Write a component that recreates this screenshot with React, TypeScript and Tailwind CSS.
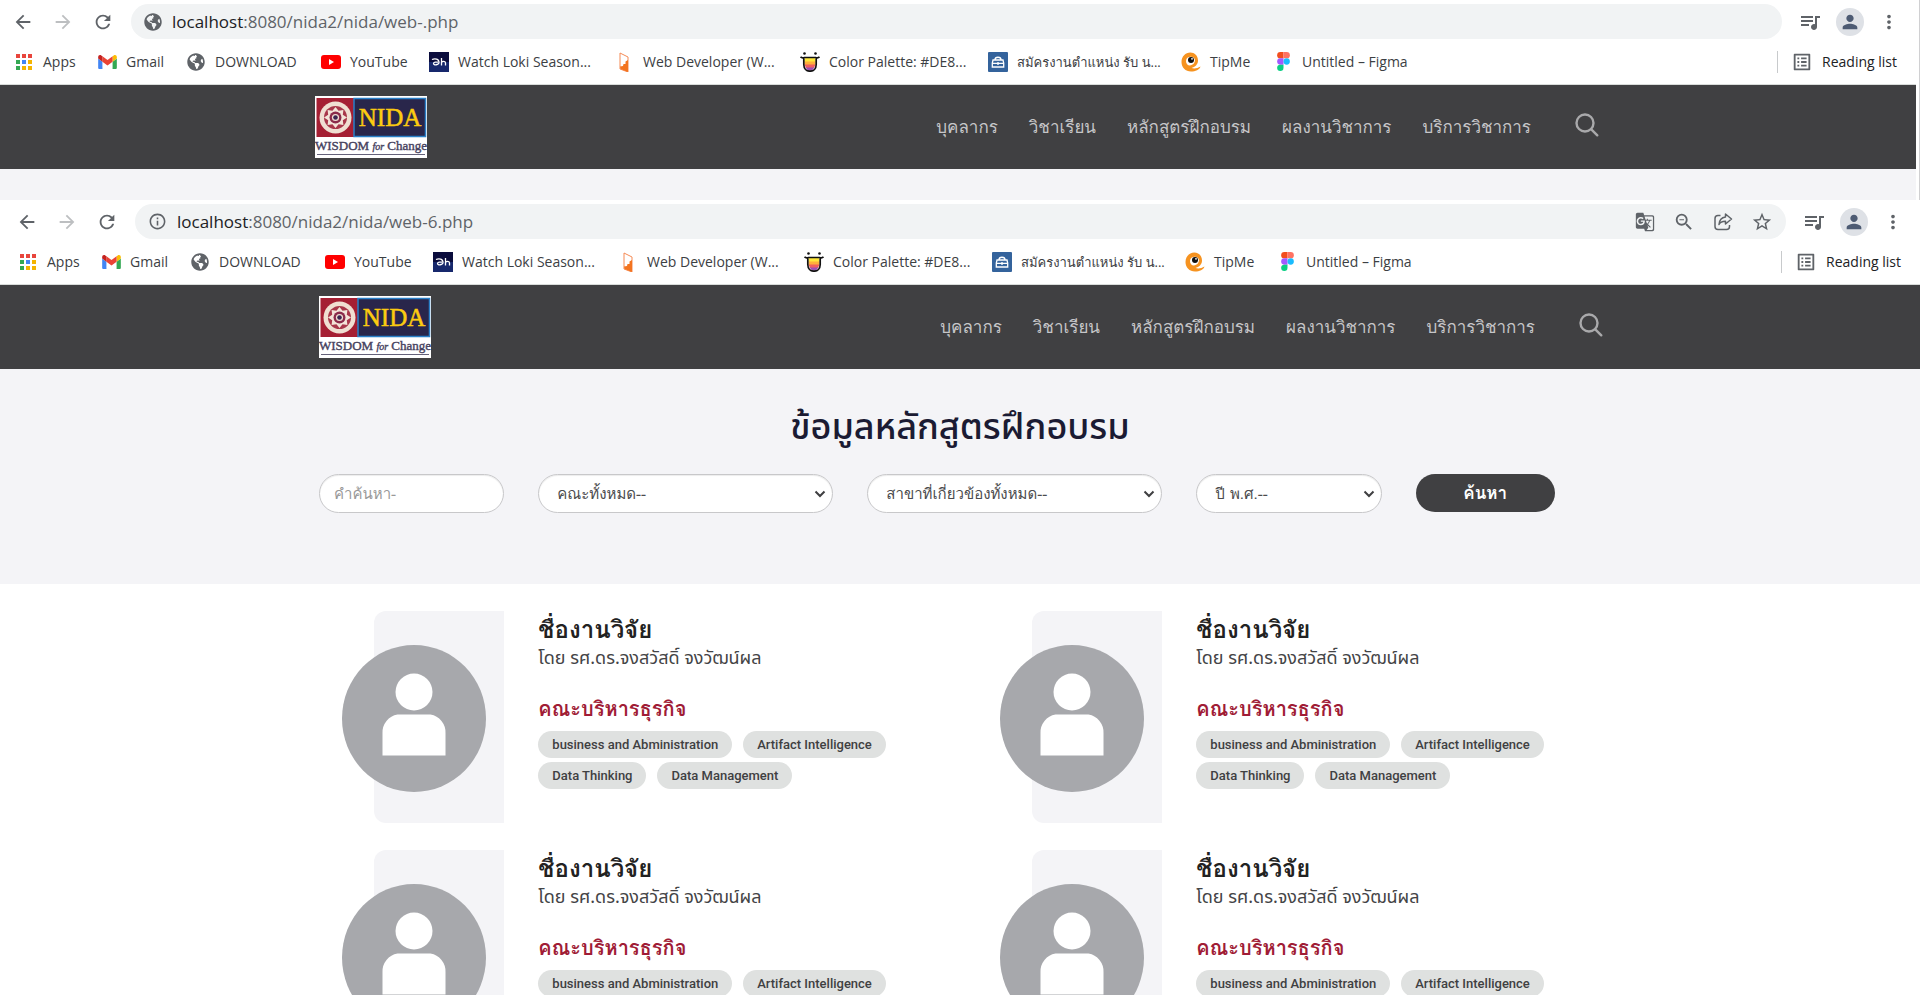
import React from "react";
import {
  MdArrowBack,
  MdArrowForward,
  MdRefresh,
  MdMoreVert,
  MdPerson,
  MdQueueMusic,
  MdOutlineListAlt,
  MdInfoOutline,
  MdStarBorder,
  MdGTranslate,
  MdOutlineZoomOut,
} from "react-icons/md";
import { FaGlobeAmericas } from "react-icons/fa";

const AppsIcon = () => (
  <svg viewBox="0 0 18 18" className="h-[18px] w-[18px]">
    {["#e8453c", "#e8453c", "#e8453c", "#34a853", "#4285f4", "#f4b400", "#34a853", "#f4b400", "#f4b400"].map((c, i) => (
      <rect key={i} x={1 + (i % 3) * 6} y={1 + Math.floor(i / 3) * 6} width="4" height="4" fill={c} />
    ))}
  </svg>
);

const GmailIcon = () => (
  <svg viewBox="52 42 88 66" className="h-[14px] w-[19px]">
    <path fill="#4285f4" d="M58 108h14V74L52 59v43c0 3.32 2.69 6 6 6" />
    <path fill="#34a853" d="M120 108h14c3.32 0 6-2.69 6-6V59l-20 15" />
    <path fill="#fbbc04" d="M120 48v26l20-15v-8c0-7.42-8.47-11.65-14.4-7.2" />
    <path fill="#ea4335" d="M72 74V48l24 18 24-18v26L96 92" />
    <path fill="#c5221f" d="M52 51v8l20 15V48l-5.6-4.2c-5.94-4.45-14.4-.22-14.4 7.2" />
  </svg>
);

const GlobeIcon = () => <FaGlobeAmericas className="h-[18px] w-[18px] text-[#5f6368]" />;

const YouTubeIcon = () => (
  <svg viewBox="0 0 20 14" className="h-[14px] w-5">
    <rect width="20" height="14" rx="3" fill="#f00" />
    <path d="M8 4l5 3-5 3z" fill="#fff" />
  </svg>
);

const LokiIcon = () => (
  <svg viewBox="0 0 20 20" className="h-5 w-5">
    <rect width="20" height="10" fill="#0a0c3c" />
    <rect y="10" width="20" height="10" fill="#17286c" />
    <path d="M3 7.500c3-1.500 7-.5 7 2.800 0 2.700-5.500 3.400-5.500 1.200 0-1.500 3-1.500 4.500-1.300M12.500 6v7.500M12.500 10.500c1-1.600 4-1.600 4 .6v2.400" fill="none" stroke="#fff" strokeWidth="1.300" />
  </svg>
);

const WebDevIcon = () => (
  <svg viewBox="0 0 20 20" className="h-5 w-5">
    <path d="M6 1l8 4v15L6 17z" fill="none" stroke="#f58a55" strokeWidth="1" />
    <path d="M14 8v12l-7.500-3-.5-2.500 3-.5.500-2h2V9.500z" fill="#f3741f" />
  </svg>
);

const PaletteIcon = () => (
  <svg viewBox="0 0 20 20" className="h-5 w-5">
    <path d="M4.500 6h11v4h-11z" fill="#ffe83b" />
    <path d="M4.500 9.500h11V13h-11z" fill="#ffb03b" />
    <path d="M4.500 12.500h11L14 16H6z" fill="#f0605f" />
    <path d="M5.500 15.500h9L12 18.500H8z" fill="#9b4fb5" />
    <path d="M.5 4.800c1 1.200 2.500 1.200 4 .7h11c1.500.5 3 .5 4-.7M3.800 5.500v7c0 4 2.700 6.700 6.200 6.700s6.200-2.700 6.200-6.700v-7" fill="none" stroke="#111" strokeWidth="1.700" />
    <circle cx="4.500" cy="1.500" r="1.300" fill="#111" />
    <circle cx="15.500" cy="1.500" r="1.300" fill="#111" />
  </svg>
);

const JobIcon = () => (
  <svg viewBox="0 0 20 20" className="h-5 w-5">
    <rect width="20" height="20" rx="1" fill="#34639c" />
    <path d="M7 7.500C7 4.500 13 4.500 13 7.500M5 8h10l.7 3v4H4.300v-4zM4.500 11.300h11M10 10v3" fill="none" stroke="#fff" strokeWidth="1.300" />
  </svg>
);

const TipMeIcon = () => (
  <svg viewBox="0 0 20 20" className="h-5 w-5">
    <path d="M17 8.500C17 3.500 13.500.5 9.300.5 4.500.5.500 4.500.500 10s4 9.500 9.500 9.500c4.500 0 8.500-1.500 9.500-5-3 2-6.500 2.500-9 1.500C14 15 17 12.500 17 8.500z" fill="#f69320" />
    <path d="M5 9a4.600 4.600 0 0 1 9-1c0 3-2 5-5 5.500C6.500 13.500 5 11.500 5 9z" fill="#fff" />
    <circle cx="10" cy="8" r="3" fill="#111" />
    <circle cx="11" cy="6.800" r=".9" fill="#fff" />
  </svg>
);

const FigmaIcon = () => (
  <svg viewBox="0 0 12 18" className="h-[19px] w-[13px]">
    <path d="M6 0H3a3 3 0 0 0 0 6h3z" fill="#f24e1e" />
    <path d="M6 0h3a3 3 0 0 1 0 6H6z" fill="#ff7262" />
    <path d="M6 6H3a3 3 0 0 0 0 6h3z" fill="#a259ff" />
    <circle cx="9" cy="9" r="3" fill="#1abcfe" />
    <path d="M6 12H3a3 3 0 1 0 3 3z" fill="#0acf83" />
  </svg>
);

const ShareIcon = () => (
  <svg viewBox="0 0 20 20" className="h-5 w-5" fill="none" stroke="#5f6368" strokeWidth="1.500" strokeLinejoin="round">
    <path d="M7.500 3.500H5A3 3 0 0 0 2 6.500v8A3 3 0 0 0 5 17.500h8.500a3 3 0 0 0 3-3V13" />
    <path d="M12.500 2l6 5-6 5V9.200c-3.500 0-5.500 1-6.500 3.300C6.300 8.500 8.500 5.500 12.500 5z" />
  </svg>
);

const SearchIcon = () => (
  <svg viewBox="0 0 24 24" className="h-6 w-6" fill="none" stroke="#a9a9ab" strokeWidth="2.400" strokeLinecap="round">
    <circle cx="10" cy="10" r="8.500" />
    <path d="M16.300 16.300l6 6" />
  </svg>
);

const bookmarks = [
  { label: "Apps", Icon: AppsIcon },
  { label: "Gmail", Icon: GmailIcon },
  { label: "DOWNLOAD", Icon: GlobeIcon },
  { label: "YouTube", Icon: YouTubeIcon },
  { label: "Watch Loki Season...", Icon: LokiIcon },
  { label: "Web Developer (W...", Icon: WebDevIcon },
  { label: "Color Palette: #DE8...", Icon: PaletteIcon },
  { label: "สมัครงานตำแหน่ง รับ น...", Icon: JobIcon, thai: true },
  { label: "TipMe", Icon: TipMeIcon },
  { label: "Untitled – Figma", Icon: FigmaIcon },
];

const navItems = ["บุคลากร", "วิชาเรียน", "หลักสูตรฝึกอบรม", "ผลงานวิชาการ", "บริการวิชาการ"];

const tags = ["business and Abministration", "Artifact Intelligence", "Data Thinking", "Data Management"];

function BrowserBar({ path, detailed }: { path: string; detailed?: boolean }) {
  return (
    <div className="border-b border-[#d9dcda] bg-white font-['Open_Sans','Loma','Noto_Sans',sans-serif]">
      <div className="flex items-center pt-1 pr-4 pl-4">
        <div className="flex gap-[18px] text-[22px] text-[#5f6368]">
          <button type="button" aria-label="Back"><MdArrowBack /></button>
          <button type="button" aria-label="Forward" className="text-[#bdbfc1]"><MdArrowForward /></button>
          <button type="button" aria-label="Reload"><MdRefresh /></button>
        </div>
        <div className="ml-[17px] flex h-[35px] flex-1 items-center rounded-full bg-[#f1f3f4] px-[13px]">
          {detailed ? <MdInfoOutline className="h-[19px] w-[19px] text-[#5f6368]" /> : <GlobeIcon />}
          <span className="ml-[10px] flex-1 text-[17px] leading-6 text-[#5f6368]">
            <span className="text-[#202124]">localhost</span>
            {path}
          </span>
          {detailed && (
            <div className="flex gap-[18px] text-[22px] text-[#5f6368]">
              <button type="button" aria-label="Translate"><MdGTranslate className="h-5 w-5" /></button>
              <button type="button" aria-label="Zoom"><MdOutlineZoomOut /></button>
              <button type="button" aria-label="Share"><ShareIcon /></button>
              <button type="button" aria-label="Bookmark"><MdStarBorder /></button>
            </div>
          )}
        </div>
        <div className="ml-4 flex items-center gap-[14px] text-[#5f6368]">
          <button type="button" aria-label="Media"><MdQueueMusic className="h-6 w-6" /></button>
          <button type="button" aria-label="Profile" className="grid h-7 w-7 place-items-center rounded-full bg-[#dee1e6]">
            <MdPerson className="h-[22px] w-[22px] text-[#4d5b73]" />
          </button>
          <button type="button" aria-label="Menu"><MdMoreVert className="h-[22px] w-[22px]" /></button>
        </div>
      </div>
      <div className="flex h-[45px] items-center justify-between pr-[19px] pl-[18px] text-sm leading-5 text-[#3c4043]">
        <div className="grid grid-cols-[83px_89px_135px_108px_185px_186px_188px_193px_92px_140px]">
          {bookmarks.map(({ label, Icon, thai }) => (
            <a key={label} href="#" className="flex items-center gap-[9px] whitespace-nowrap">
              <span className="grid w-5 shrink-0 place-items-center"><Icon /></span>
              <span className={thai ? "text-[13px]" : "text-sm"}>{label}</span>
            </a>
          ))}
        </div>
        <button type="button" className="flex items-center gap-[9px] whitespace-nowrap border-l border-[#c8cacc] pl-[13px] text-[#202124]">
          <MdOutlineListAlt className="h-[22px] w-[22px] text-[#5f6368]" />
          Reading list
        </button>
      </div>
    </div>
  );
}

function Logo() {
  return (
    <svg viewBox="0 0 112 62" className="h-[62px] w-28" role="img" aria-label="NIDA">
      <rect width="112" height="62" fill="#fff" />
      <rect x="1.500" y="2" width="37.500" height="39" fill="#a51f33" />
      <rect x="39" y="2.500" width="71.500" height="38" fill="#29264b" stroke="#2a80c8" strokeWidth="1.500" />
      <circle cx="20.500" cy="21.500" r="16" fill="#f0dfd2" />
      <circle cx="20.500" cy="21.500" r="11.500" fill="#a8374a" />
      <path d="M20.500 11l3 3.800 4.900-.8-.6 4.800 4.200 2.700-4.200 2.700.6 4.800-4.900-.8-3 3.800-3-3.800-4.900.8.6-4.800L9 21.500l4.200-2.700-.6-4.800 4.900.8z" fill="#f3e4d8" />
      <circle cx="20.500" cy="21.500" r="6" fill="#8b2b4a" />
      <circle cx="20.500" cy="21.500" r="3.600" fill="#f0dfd2" />
      <circle cx="20.500" cy="21.500" r="2.300" fill="#3a2550" />
      <text x="75" y="30" textAnchor="middle" fontSize="25" fontFamily="Liberation Serif" fill="#fccb10" stroke="#fccb10" strokeWidth=".5">NIDA</text>
      <text x="56" y="54" textAnchor="middle" fontSize="13" fontFamily="Liberation Serif" fill="#47435f" stroke="#47435f" strokeWidth=".4">
        WISDOM <tspan fontStyle="italic" fontSize="10">for</tspan> Change
      </text>
      <path d="M2 58.500h108" stroke="#65627a" strokeWidth="1" />
    </svg>
  );
}

function SiteHeader() {
  return (
    <header className="bg-[#404042]">
      <div className="mx-auto flex h-[84px] max-w-[1316px] items-center justify-between pr-[15px] pl-[17px]">
        <a href="#"><Logo /></a>
        <nav className="flex items-center gap-[31px] font-['Loma','Noto_Sans_Thai',sans-serif] text-[17px] leading-6 text-[#c6c6c8]">
          {navItems.map((item) => (
            <a key={item} href="#">{item}</a>
          ))}
          <button type="button" aria-label="ค้นหา" className="ml-[13px] pb-1"><SearchIcon /></button>
        </nav>
      </div>
    </header>
  );
}

const field =
  "h-[39px] w-full appearance-none rounded-[20px] border border-[#c8c8ca] bg-white font-['Loma','Noto_Sans_Thai',sans-serif] text-[15px] leading-8 text-[#4b4b4d] shadow-[inset_0_1px_1px_rgba(0,0,0,0.075)]";

function SelectField({ label, text, span }: { label: string; text: string; span: string }) {
  return (
    <div className={`relative ${span}`}>
      <select aria-label={label} className={`${field} pr-8 pl-[18px]`}>
        <option>{text}</option>
      </select>
      <svg viewBox="0 0 12 8" className="pointer-events-none absolute top-4 right-[7px] h-2 w-3" fill="none" stroke="#3f3f41" strokeWidth="2">
        <path d="M1.500 1.500L6 6l4.500-4.500" />
      </svg>
    </div>
  );
}

function Avatar() {
  return (
    <svg viewBox="0 0 144 147" className="absolute top-[34px] right-[35px] h-[147px] w-36">
      <ellipse cx="72" cy="73.500" rx="72" ry="73.500" fill="#a7a8ac" />
      <circle cx="72" cy="47" r="18.500" fill="#fff" />
      <path d="M40.500 110.500V88a18 18 0 0 1 15-18.500h33a18 18 0 0 1 15 18.500v22.500z" fill="#fff" />
    </svg>
  );
}

function Card() {
  return (
    <article className="grid grid-cols-3">
      <div className="relative px-[17px]">
        <div className="ml-[55px] h-[212px] rounded-l-xl bg-[#f4f4f7]" />
        <Avatar />
      </div>
      <div className="col-span-2 px-[17px]">
        <h2 className="pt-1 font-['Loma','Noto_Sans_Thai',sans-serif] text-2xl leading-[30px] font-bold text-[#222]">ชื่องานวิจัย</h2>
        <p className="text-lg leading-7 text-[#444446]">โดย รศ.ดร.จงสวัสดิ์ จงวัฒน์ผล</p>
        <h3 className="pt-[22px] font-['Loma','Noto_Sans_Thai',sans-serif] text-xl leading-7 font-bold text-[#a01c36]">คณะบริหารธุรกิจ</h3>
        <ul className="flex flex-wrap gap-x-[11px] gap-y-1 pt-2 font-['Roboto',sans-serif] text-[13px] leading-[27px] font-medium text-[#404042]">
          {tags.map((tag) => (
            <li key={tag} className="rounded-full bg-[#dfe1e0] px-[14px]">{tag}</li>
          ))}
        </ul>
      </div>
    </article>
  );
}

export default function App() {
  return (
    <div className="h-screen overflow-hidden bg-white font-['Noto_Sans_Thai','Noto_Sans',sans-serif]">
      <div className="border-r border-[#d0d0d2] bg-white">
        <div className="mr-[3px] -ml-1 bg-[#f4f4f7] pb-[31px]">
          <BrowserBar path=":8080/nida2/nida/web-.php" />
          <SiteHeader />
        </div>
      </div>
      <BrowserBar path=":8080/nida2/nida/web-6.php" detailed />
      <SiteHeader />
      <section className="bg-[#f4f4f7] pt-[34px] pb-[71px]">
        <h1 className="text-center text-4xl leading-[50px] font-medium text-[#1b1b33]">ข้อมูลหลักสูตรฝึกอบรม</h1>
        <form className="mx-auto grid max-w-[1316px] grid-cols-12 gap-x-[34px] px-[17px] pt-[21px]" onSubmit={(e) => e.preventDefault()}>
          <div className="col-span-2">
            <input type="text" aria-label="คำค้นหา" placeholder="คำค้นหา-" className={`${field} px-[14px] placeholder:text-[#999]`} />
          </div>
          <SelectField label="คณะ" text="คณะทั้งหมด--" span="col-span-3" />
          <SelectField label="สาขา" text="สาขาที่เกี่ยวข้องทั้งหมด--" span="col-span-3" />
          <SelectField label="ปี พ.ศ." text="ปี พ.ศ.--" span="col-span-2" />
          <button type="submit" className="col-span-2 h-[38px] w-3/4 rounded-[20px] bg-[#404042] font-['Loma','Noto_Sans_Thai',sans-serif] text-[17px] font-bold text-white">ค้นหา</button>
        </form>
      </section>
      <main className="mx-auto grid max-w-[1316px] grid-cols-2 gap-y-[27px] pt-[27px]">
        <Card />
        <Card />
        <Card />
        <Card />
      </main>
    </div>
  );
}
